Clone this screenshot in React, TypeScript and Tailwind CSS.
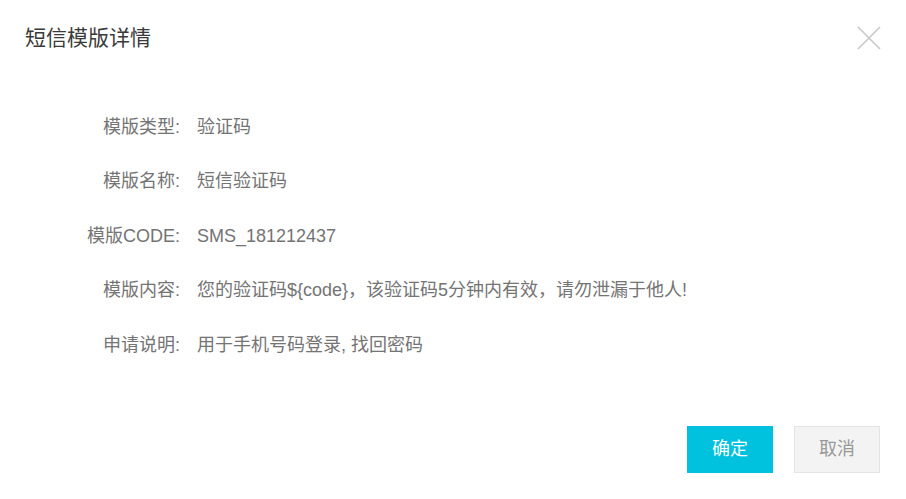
import React from "react";

const rows: [string, string][] = [
  ["模版类型:", "验证码"],
  ["模版名称:", "短信验证码"],
  ["模版CODE:", "SMS_181212437"],
  ["模版内容:", "您的验证码${code}，该验证码5分钟内有效，请勿泄漏于他人!"],
  ["申请说明:", "用于手机号码登录, 找回密码"],
];

export default function App() {
  return (
    <div
      className="w-[906px] h-[499px] bg-white flex flex-col"
      style={{ fontFamily: '"Liberation Sans", "Noto Sans CJK SC", sans-serif' }}
    >
      <div className="flex items-start justify-between pl-[25px] pr-[25px] pt-[23px] h-[100px]">
        <div className="text-[21px] leading-[30px] text-[#3a3a3a]">短信模版详情</div>
        <svg width="24" height="24" viewBox="0 0 24 24" className="mt-[3px]">
          <path d="M1 1 L23 23 M23 1 L1 23" stroke="#c8c8c8" strokeWidth="1.6" fill="none" />
        </svg>
      </div>
      <div className="flex flex-col">
        {rows.map(([k, v]) => (
          <div key={k} className="flex items-center h-[54.5px] text-[18px] text-[#747474]">
            <div className="w-[180px] text-right">{k}</div>
            <div className="pl-[17px]">{v}</div>
          </div>
        ))}
      </div>
      <div className="flex justify-end gap-[21px] pr-[26px] mt-[53px]">
        <button className="w-[86px] h-[47px] bg-[#00c1de] text-white text-[18px]">确定</button>
        <button className="w-[86px] h-[47px] bg-[#f3f3f3] border border-[#e5e5e5] text-[#999999] text-[18px]">
          取消
        </button>
      </div>
    </div>
  );
}
